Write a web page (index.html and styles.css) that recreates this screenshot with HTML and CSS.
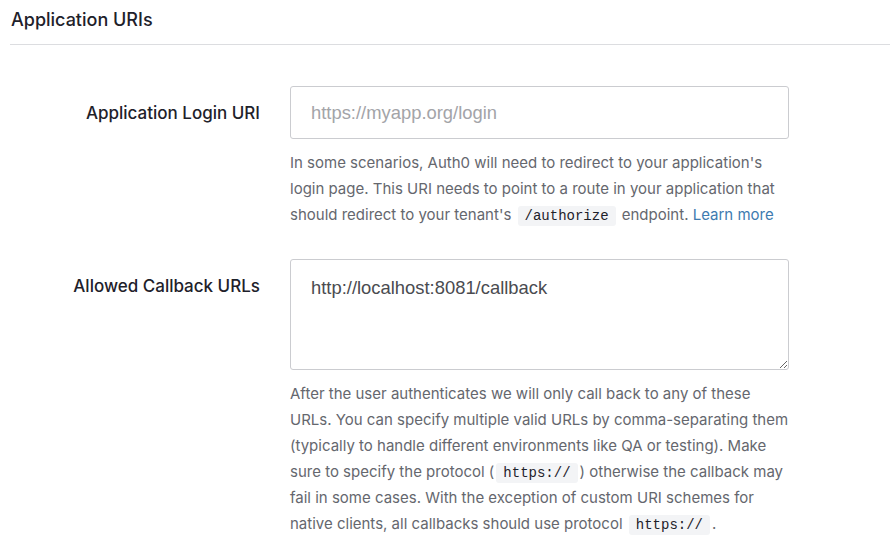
FILE: index.html
```html
<!DOCTYPE html>
<html>
<head>
<meta charset="utf-8">
<link rel="stylesheet" href="styles.css">
</head>
<body>
<section class="panel">
  <h2 class="title">Application URIs</h2>
  <div class="rows">
    <div class="row">
      <label class="label">Application Login URI</label>
      <div class="field">
        <input class="input" type="text" placeholder="https://myapp.org/login">
        <p class="help">In some scenarios, Auth0 will need to redirect to your application's login page. This URI needs to point to a route in your application that should redirect to your tenant's <code>/authorize</code> endpoint. <a href="#">Learn more</a></p>
      </div>
    </div>
    <div class="row">
      <label class="label">Allowed Callback URLs</label>
      <div class="field">
        <textarea class="textarea">http://localhost:8081/callback</textarea>
        <p class="help">After the user authenticates we will only call back to any of these URLs. You can specify multiple valid URLs by comma-separating them (typically to handle different environments like QA or testing). Make sure to specify the protocol (<code>https://</code>) otherwise the callback may fail in some cases. With the exception of custom URI schemes for native clients, all callbacks should use protocol <code>https://</code>.</p>
      </div>
    </div>
  </div>
</section>
</body>
</html>
```

FILE: styles.css
```css
html, body {
  margin: 0;
  padding: 0;
  background: #fff;
}
body {
  font-family: "Inter", "Roboto", "Liberation Sans", sans-serif;
  color: #1e212a;
}
.panel {
  padding-left: 10px;
}
.title {
  margin: 0;
  padding: 9px 0 0 1px;
  height: 45px;
  box-sizing: border-box;
  font-size: 18px;
  font-weight: 500;
  line-height: 22px;
  border-bottom: 1px solid #dcdde0;
}
.rows {
  padding-top: 41px;
  display: flex;
  flex-direction: column;
  gap: 31px;
}
.row {
  display: flex;
  gap: 30px;
}
.label {
  width: 250px;
  text-align: right;
  font-size: 17px;
  font-weight: 500;
  line-height: 22px;
  padding-top: 16px;
  color: #1e212a;
}
.field {
  width: 499px;
  display: flex;
  flex-direction: column;
}
.input, .textarea {
  box-sizing: border-box;
  width: 499px;
  border: 1px solid #cbccd0;
  border-radius: 3px;
  font-family: "Liberation Sans", Arial, sans-serif;
  font-size: 18.4px;
  color: #4a4b50;
  padding: 0 20px;
  outline: none;
  background: #fff;
}
.input {
  height: 53px;
}
.input::placeholder {
  color: #a3a4a8;
}
.textarea {
  height: 111px;
  padding-top: 17px;
  line-height: 22px;
  resize: vertical;
  display: block;
}
.help {
  margin: 11px 0 0;
  font-size: 15px;
  line-height: 26px;
  color: #65676e;
}
.help code {
  display: inline-block;
  font-family: "Liberation Mono", "DejaVu Sans Mono", monospace;
  font-size: 14px;
  line-height: 20px;
  color: #1e212a;
  background: #f3f4f6;
  border-radius: 3px;
  padding: 0 7px;
  margin: 0 2px;
}
.help a {
  color: #3e7bb0;
  text-decoration: none;
}
```
